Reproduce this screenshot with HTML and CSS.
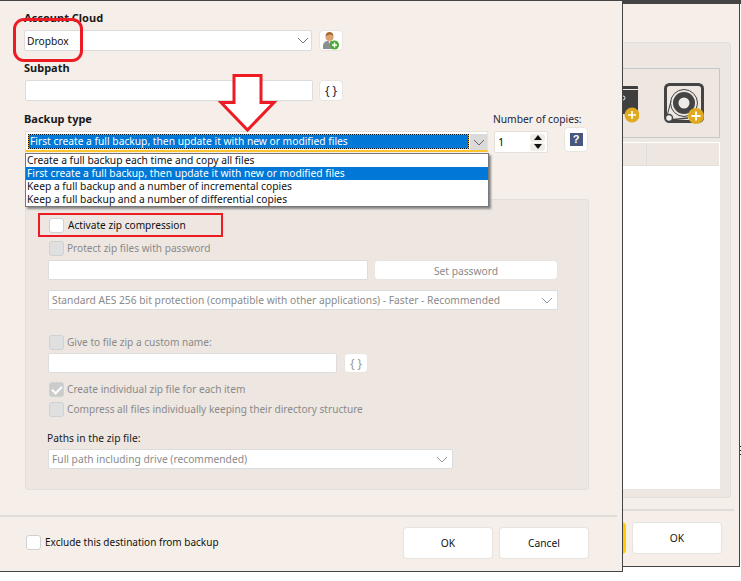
FILE: index.html
```html
<!DOCTYPE html>
<html lang="en">
<head>
    <meta charset="UTF-8">
    <title>Backup destination</title>
    <link rel="stylesheet" href="styles.css">
</head>
<body>
    <div class="desk">
        <div class="backwin">
            <div class="backwin__body">
                <div class="backwin__panel">
                    <div class="tools">
                        <svg class="tools__drive" width="16" height="38" viewBox="0 0 16 38">
                            <path d="M0 1h14q1 0 1 1v2H0zM0 5h15v24H0z" fill="#3f3f3f"/>
                            <circle cx="0" cy="13" r="2" fill="none" stroke="#eee" stroke-width="1"/>
                            <circle cx="9" cy="30" r="7.500" fill="#e0aa1f"/>
                            <path d="M5 30h8M9 26v8" stroke="#fff" stroke-width="1.600"/>
                        </svg>
                        <svg class="tools__tape" width="42" height="42" viewBox="0 0 42 42">
                            <rect x="1.500" y="1.500" width="37" height="37" rx="4" fill="none" stroke="#444" stroke-width="3"/>
                            <circle cx="20" cy="20" r="13.500" fill="none" stroke="#444" stroke-width="1"/>
                            <circle cx="20" cy="20" r="11" fill="#444"/>
                            <circle cx="20" cy="20" r="5.500" fill="#f0ebe7"/>
                            <path d="M7 18L3 33" stroke="#444" stroke-width="1"/>
                            <path d="M5 37L24 35" stroke="#444" stroke-width="1.500"/>
                            <circle cx="5" cy="35" r="3.500" fill="#eee" stroke="#444" stroke-width="1.500"/>
                            <circle cx="32" cy="33" r="8" fill="#e0aa1f"/>
                            <path d="M27.500 33h9M32 28.500v9" stroke="#fff" stroke-width="1.800"/>
                        </svg>
                    </div>
                    <div class="tablebox">
                        <div class="tablebox__head"><span class="tablebox__col"></span></div>
                    </div>
                </div>
            </div>
            <div class="backwin__foot">
                <span class="btn btn--yellow"></span>
                <button class="btn btn--wide">OK</button>
            </div>
        </div>
        <div class="edge-ticks"></div>

        <div class="dialog">
            <div class="form">
                <label class="lbl">Account Cloud</label>
                <div class="row">
                    <div class="combo combo--account"><span>Dropbox</span>
                        <svg class="chev" width="12" height="7" viewBox="0 0 12 7"><path d="M1 1l5 5 5-5" fill="none" stroke="#777" stroke-width="1"/></svg>
                    </div>
                    <button class="iconbtn">
                        <svg width="18" height="18" viewBox="0 0 18 18">
                            <circle cx="7.500" cy="5" r="4" fill="#d9a273"/>
                            <path d="M3.500 4q.5-4 4-4t4 4q-2-2-4-1.500t-4 1.500z" fill="#a4682f"/>
                            <path d="M1 17v-3q0-4 4-5h5q4 1 4 5v3z" fill="#8b8e91"/>
                            <path d="M6.500 9l1 3 1-3z" fill="#e8e8e8"/>
                            <circle cx="12.500" cy="13" r="4.500" fill="#4eab2f"/>
                            <path d="M10 13h5M12.500 10.500v5" stroke="#fff" stroke-width="1.500"/>
                        </svg>
                    </button>
                </div>
                <label class="lbl lbl--sub">Subpath</label>
                <div class="row row--sub">
                    <input class="txt txt--subpath" type="text">
                    <button class="iconbtn iconbtn--braces">{ }</button>
                </div>
                <div class="backup">
                    <div class="backup__type">
                        <label class="lbl">Backup type</label>
                        <div class="typesel">
                            <span class="typesel__val">First create a full backup, then update it with new or modified files</span>
                            <span class="typesel__arrow">
                                <svg width="12" height="7" viewBox="0 0 12 7"><path d="M1 1l5 5 5-5" fill="none" stroke="#666" stroke-width="1"/></svg>
                            </span>
                        </div>
                    </div>
                    <div class="backup__copies">
                        <label class="lbl lbl--plain lbl--copies">Number of copies:</label>
                        <div class="spin">
                            <span>1</span>
                            <span class="spin__btns">
                                <i class="spin__up"></i>
                                <i class="spin__down"></i>
                            </span>
                        </div>
                    </div>
                    <button class="iconbtn iconbtn--help"><span class="help">?</span></button>
                </div>

                <div class="panel">
                    <div class="chk chk--on"><input type="checkbox"><span>Activate zip compression</span></div>
                    <div class="chk chk--off chk--gap"><input type="checkbox" disabled><span>Protect zip files with password</span></div>
                    <div class="row row--pass">
                        <input class="txt txt--pass" type="text" disabled>
                        <button class="setpass" disabled>Set password</button>
                    </div>
                    <div class="combo combo--off combo--aes"><span>Standard AES 256 bit protection (compatible with other applications) - Faster - Recommended</span>
                        <svg class="chev" width="12" height="7" viewBox="0 0 12 7"><path d="M1 1l5 5 5-5" fill="none" stroke="#999" stroke-width="1"/></svg>
                    </div>
                    <div class="chk chk--off chk--name"><input type="checkbox" disabled><span>Give to file zip a custom name:</span></div>
                    <div class="row row--name">
                        <input class="txt txt--name" type="text" disabled>
                        <button class="iconbtn iconbtn--braces iconbtn--off" disabled>{ }</button>
                    </div>
                    <div class="chk chk--off chk--create"><input type="checkbox" checked disabled><span>Create individual zip file for each item</span></div>
                    <div class="chk chk--off chk--compress"><input type="checkbox" disabled><span>Compress all files individually keeping their directory structure</span></div>
                    <label class="lbl lbl--plain lbl--paths">Paths in the zip file:</label>
                    <div class="combo combo--off combo--paths"><span>Full path including drive (recommended)</span>
                        <svg class="chev" width="12" height="7" viewBox="0 0 12 7"><path d="M1 1l5 5 5-5" fill="none" stroke="#999" stroke-width="1"/></svg>
                    </div>
                </div>
            </div>
            <div class="dialog__foot">
                <div class="chk chk--exclude"><input type="checkbox"><span>Exclude this destination from backup</span></div>
                <button class="btn">OK</button>
                <button class="btn">Cancel</button>
            </div>
        </div>

        <ul class="droplist">
            <li>Create a full backup each time and copy all files</li>
            <li class="is-sel">First create a full backup, then update it with new or modified files</li>
            <li>Keep a full backup and a number of incremental copies</li>
            <li>Keep a full backup and a number of differential copies</li>
        </ul>

        <!-- red annotations drawn on the screenshot -->
        <div class="mark mark--dropbox"></div>
        <div class="mark mark--zip"></div>
        <svg class="mark-arrow" width="60" height="60" viewBox="0 0 60 60">
            <path d="M16 1.500h27v27h13L29.500 56 3 28.500h13z" fill="#fff" stroke="#ed1c24" stroke-width="3"/>
        </svg>
    </div>
</body>
</html>
```

FILE: styles.css
```css
* {
    box-sizing: border-box;
}
html, body {
    margin: 0;
    background: #fff;
}
body {
    font: 10.25px/16px "Noto Sans", "Open Sans", sans-serif;
    color: #111;
}
.desk {
    position: relative;
    width: 741px;
    height: 581px;
    overflow: hidden;
}

/* window behind the dialog */
.backwin {
    position: absolute;
    left: 500px;
    top: 0;
    width: 240px;
    height: 567px;
    background: #f6efe9;
    border-top: 4px solid #444;
    border-right: 1px solid #444;
    border-bottom: 1px solid #444;
    padding-top: 38px;
}
.backwin:before {
    content: "";
    position: absolute;
    top: -4px;
    right: -2px;
    width: 2px;
    height: 4px;
    background: #444;
}
.edge-ticks {
    position: absolute;
    left: 740px;
    top: 446px;
    width: 1px;
    height: 9px;
    background: repeating-linear-gradient(#222 0 1px, transparent 1px 4px);
}
.backwin__panel {
    width: 231px;
    height: 456px;
    background: #ede6e1;
    border: 1px solid #e2ded9;
    border-radius: 3px;
    padding: 25px 10px 0 0;
}
.tools {
    display: flex;
    align-items: flex-start;
    height: 70px;
    border: 1px solid #c5c8c8;
    padding-top: 16px;
}
.tools__drive {
    margin-left: 121px;
}
.tools__tape {
    margin-left: 25px;
    margin-top: -2px;
}
.tablebox {
    height: 347px;
    margin-top: 4px;
    background: #fff;
    border: 1px solid #fff;
}
.tablebox__head {
    height: 23px;
    background: #ede6e1;
    border-bottom: 1px solid #e2ded9;
}
.tablebox__col {
    display: block;
    width: 145px;
    height: 22px;
    border-right: 1px solid #e0dbd6;
}
.backwin__foot {
    display: flex;
    justify-content: flex-end;
    gap: 6px;
    margin-top: 11px;
    padding: 11px 12px 0 0;
    border-top: 2px solid #e0dcd8;
    margin-right: 5px;
}

/* front dialog */
.dialog {
    position: absolute;
    left: 0;
    top: 0;
    width: 623px;
    height: 572px;
    display: flex;
    flex-direction: column;
    background: #f6efe9;
    border-top: 1px solid #444;
    border-right: 1px solid #444;
    border-bottom: 1px solid #444;
}
.form {
    padding: 9px 33px 0 24px;
}
.lbl {
    display: block;
    height: 16px;
    margin-bottom: 4px;
    font-size: 11px;
    font-weight: 700;
    color: #1a1a1a;
}
.lbl--sub {
    margin-top: 9px;
}
.lbl--plain {
    font-size: 10.25px;
    font-weight: 400;
    margin-bottom: 4px;
}
.lbl--copies {
    white-space: nowrap;
    color: #1a2340;
}
.row {
    display: flex;
    gap: 7px;
}
.row--sub {
    gap: 6px;
}
.txt {
    height: 21px;
    background: #fff;
    border: 1px solid #dcdcdc;
    border-radius: 2px;
    padding: 0;
    outline: none;
}
.txt--subpath {
    width: 288px;
    margin-left: 1px;
}
.txt--pass {
    width: 320px;
}
.txt--name {
    width: 289px;
}
.combo {
    display: flex;
    align-items: center;
    justify-content: space-between;
    height: 21px;
    background: #fff;
    border: 1px solid #dcdcdc;
    border-radius: 2px;
    padding: 0 2px 0 2px;
}
.combo--account {
    width: 288px;
}
.combo--off {
    height: 20px;
    color: #8a8a8a;
    padding-left: 3px;
    padding-right: 4px;
}
.combo--aes {
    margin-top: 10px;
    width: 510px;
}
.combo--paths {
    width: 405px;
}
.iconbtn {
    display: flex;
    align-items: center;
    justify-content: center;
    width: 24px;
    height: 21px;
    padding: 0;
    background: #fff;
    border: 1px solid #e8e4e0;
    border-radius: 4px;
    font: 12px "Noto Sans", sans-serif;
    color: #123;
}
.iconbtn--off {
    color: #999;
}

/* backup type row */
.backup {
    display: flex;
    align-items: flex-start;
    margin-top: 10px;
}
.backup__type {
    width: 469px;
}
.typesel {
    display: flex;
    width: 463px;
    height: 21px;
    margin-left: 1px;
    background: #fff;
    border: 1px solid #e4e0dc;
    border-bottom: 2px solid #fcc52f;
    padding: 2px 0 0 2px;
}
.typesel__val {
    flex: 1;
    height: 15px;
    padding-left: 1px;
    background: #0078d7;
    border: 1px solid #f6a623;
    color: #fff;
    line-height: 13px;
    outline: 1px dotted #111;
    outline-offset: -1px;
}
.typesel__arrow {
    display: flex;
    align-items: center;
    justify-content: center;
    width: 17px;
    height: 16px;
    margin-left: 1px;
    background: #dadada;
}
.backup__copies {
    width: 71px;
}
.spin {
    display: flex;
    align-items: center;
    justify-content: space-between;
    width: 54px;
    height: 22px;
    margin-left: 1px;
    background: #fff;
    border: 1px solid #e4e0dc;
    border-radius: 2px;
    padding: 0 2px 0 3px;
    font-size: 11px;
}
.spin__btns {
    display: flex;
    flex-direction: column;
    gap: 1px;
}
.spin__btns i {
    display: flex;
    align-items: center;
    justify-content: center;
    width: 15px;
    height: 8px;
    background: #f0ece8;
    border-radius: 3px;
}
.spin__up:after {
    content: "";
    border: 4px solid transparent;
    border-top: 0;
    border-bottom: 5px solid #111;
}
.spin__down:after {
    content: "";
    border: 4px solid transparent;
    border-bottom: 0;
    border-top: 5px solid #111;
}
.iconbtn--help {
    height: 25px;
    margin-top: 16px;
}
.help {
    display: block;
    width: 13px;
    height: 13px;
    background: #47577f;
    color: #fff;
    font: 700 11px/13px "Liberation Sans", sans-serif;
    text-align: center;
}

/* zip panel */
.panel {
    width: 564px;
    height: 291px;
    margin: 46px 0 0 1px;
    padding: 17px 0 0 22px;
    background: #ede6e1;
    border: 1px solid #e2ded9;
    border-radius: 3px;
}
.chk {
    display: flex;
    align-items: center;
    height: 16px;
    color: #8a8a8a;
}
.chk input {
    appearance: none;
    width: 15px;
    height: 15px;
    margin: 0 4px 0 1px;
    background: #dfe0df;
    border: 1px solid #cfd2d2;
    border-radius: 3px;
}
.chk--off {
    font-size: 10.1px;
}
.chk--off input {
    margin-right: 3px;
}
.chk input:checked {
    background: #ccc;
}
.chk input:checked:after {
    content: "";
    display: block;
    width: 4px;
    height: 8px;
    margin: 1px 0 0 4px;
    border: solid #fff;
    border-width: 0 2px 2px 0;
    transform: rotate(45deg);
}
.chk--on {
    font-size: 10.15px;
    color: #111;
}
.chk--on input, .chk--exclude input {
    background: #fff;
}
.chk--gap {
    margin-top: 7px;
}
.row--pass {
    margin-top: 4px;
    gap: 6px;
}
.row--pass .txt {
    height: 20px;
}
.setpass {
    width: 184px;
    height: 20px;
    padding: 1px 0 0;
    background: #fff;
    border: 1px solid #e8e4e0;
    border-radius: 4px;
    font: inherit;
    color: #8a8a8a;
}
.chk--name {
    margin-top: 24px;
}
.row--name {
    margin-top: 3px;
}
.row--name .txt, .row--name .iconbtn {
    height: 20px;
}
.chk--create {
    margin-top: 8px;
}
.chk--compress {
    margin-top: 4px;
}
.lbl--paths {
    margin: 13px 0 3px -1px;
}

/* footer */
.dialog__foot {
    display: flex;
    align-items: flex-start;
    gap: 6px;
    margin: 25px 5px 0 0;
    padding: 10px 28px 0 26px;
    border-top: 2px solid #e0dcd8;
}
.chk--exclude {
    flex: 1;
    margin-top: 7px;
    font-size: 10px;
    color: #111;
}
.chk--exclude input {
    margin-left: 0;
}
.btn {
    width: 90px;
    height: 32px;
    background: #fff;
    border: 1px solid #e6e2de;
    border-radius: 4px;
    padding: 0;
    font: inherit;
    color: #111;
}
.btn--yellow {
    display: block;
    background: #fc0;
    border-color: #fc0;
}

/* dropdown opened over the form */
.droplist {
    position: absolute;
    left: 25px;
    top: 153px;
    width: 464px;
    height: 54px;
    margin: 0;
    padding: 0;
    list-style: none;
    background: #fff;
    border: 1px solid #777;
    box-shadow: 2px 2px 2px #888;
}
.droplist li {
    height: 13px;
    padding-left: 1px;
    line-height: 13px;
}
.droplist .is-sel {
    background: #0078d7;
    color: #fff;
}

/* annotations */
.mark {
    position: absolute;
}
.mark--dropbox {
    left: 13px;
    top: 18px;
    width: 70px;
    height: 44px;
    border: 3px solid #ed1c24;
    border-radius: 11px;
}
.mark--zip {
    left: 38px;
    top: 213px;
    width: 185px;
    height: 24px;
    border: 2px solid #ed1c24;
}
.mark-arrow {
    position: absolute;
    left: 218px;
    top: 74px;
}
```
